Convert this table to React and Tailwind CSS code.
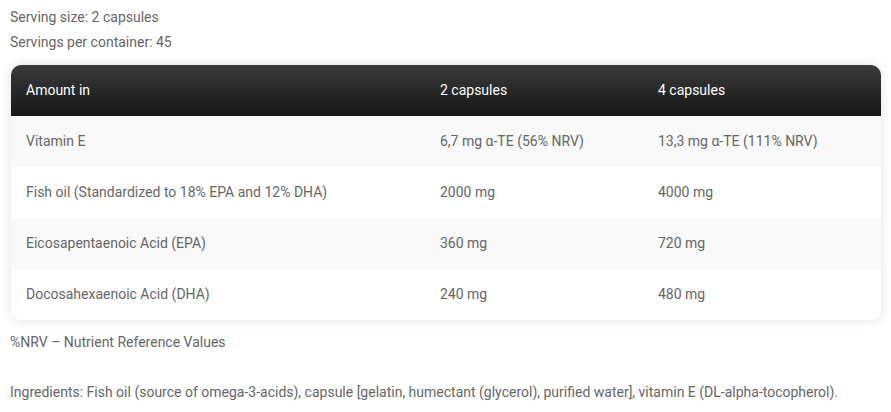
export default function App() {
  const rows = [
    ["Vitamin E", "6,7 mg α-TE (56% NRV)", "13,3 mg α-TE (111% NRV)"],
    ["Fish oil (Standardized to 18% EPA and 12% DHA)", "2000 mg", "4000 mg"],
    ["Eicosapentaenoic Acid (EPA)", "360 mg", "720 mg"],
    ["Docosahexaenoic Acid (DHA)", "240 mg", "480 mg"],
  ];
  return (
    <div className="w-[891px] h-[412px] bg-white overflow-hidden text-[14px] text-[#666]" style={{ fontFamily: "Roboto, 'Liberation Sans', sans-serif" }}>
      <div className="pl-[10px] pt-[7px] leading-[20px]">
        <p>Serving size: 2 capsules</p>
        <p className="mt-[5px]">Servings per container: 45</p>
      </div>
      <div className="ml-[11px] mt-[13px] w-[870px] rounded-[10px] shadow-[0_0_12px_rgba(0,0,0,0.12)] overflow-hidden">
        <div className="flex h-[51px] items-center text-white bg-gradient-to-b from-[#3b3b3b] to-[#171717]">
          <div className="w-[414px] pl-[15px]">Amount in</div>
          <div className="w-[218px] pl-[15px]">2 capsules</div>
          <div className="flex-1 pl-[15px]">4 capsules</div>
        </div>
        {rows.map((r, i) => (
          <div key={i} className={`flex h-[51px] items-center ${i % 2 === 0 ? "bg-[#f9f9f9]" : "bg-white"}`}>
            <div className="w-[414px] pl-[15px]">{r[0]}</div>
            <div className="w-[218px] pl-[15px]">{r[1]}</div>
            <div className="flex-1 pl-[15px]">{r[2]}</div>
          </div>
        ))}
      </div>
      <p className="pl-[10px] mt-[12px] leading-[20px]">%NRV – Nutrient Reference Values</p>
      <p className="pl-[10px] mt-[30px] leading-[20px]">Ingredients: Fish oil (source of omega-3-acids), capsule [gelatin, humectant (glycerol), purified water], vitamin E (DL-alpha-tocopherol).</p>
    </div>
  );
}
